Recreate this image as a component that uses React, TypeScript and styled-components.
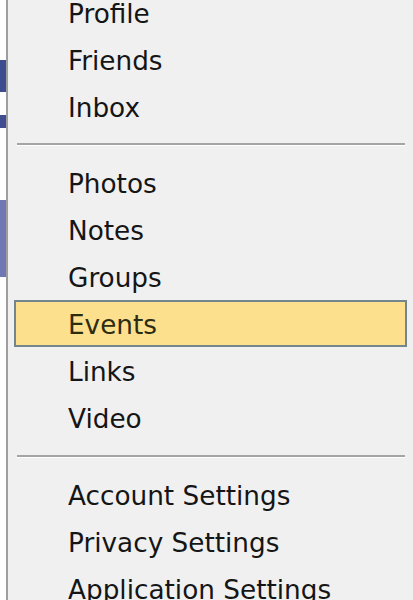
import React from "react";
import styled, { createGlobalStyle } from "styled-components";

const Global = createGlobalStyle`
  html, body { margin: 0; padding: 0; background: #ffffff; }
  body { width: 413px; height: 600px; overflow: hidden; }
`;

const Page = styled.div`
  display: flex;
  width: 413px;
  height: 600px;
  overflow: hidden;
  background: #fdfdfd;
`;

const Strip = styled.div`
  width: 6px;
  display: flex;
  flex-direction: column;
  flex-shrink: 0;
`;

const Block = styled.div<{ $top: number; $h: number; $c: string }>`
  margin-top: ${(p) => p.$top}px;
  height: ${(p) => p.$h}px;
  background: ${(p) => p.$c};
`;

const Menu = styled.div`
  flex: 1;
  background: #f0f0f0;
  border-left: 2px solid #9d9d9d;
  display: flex;
  flex-direction: column;
  font-family: "DejaVu Sans", "Liberation Sans", sans-serif;
  font-size: 26.3px;
  color: #151515;
`;

const List = styled.div`
  margin-top: -11px;
  display: flex;
  flex-direction: column;
`;

const Item = styled.div<{ $active?: boolean }>`
  box-sizing: border-box;
  height: 47px;
  margin: 0 6px;
  padding-left: 52px;
  padding-top: 2px;
  display: flex;
  align-items: center;
  border: 2px solid ${(p) => (p.$active ? "#72868b" : "transparent")};
  background: ${(p) => (p.$active ? "#fce08e" : "transparent")};
  color: ${(p) => (p.$active ? "#2e2c10" : "#151515")};
  white-space: nowrap;
`;

const Separator = styled.div<{ $top: number; $bottom: number }>`
  height: 2px;
  background: #a4a4a4;
  border-bottom: 1px solid #ffffff;
  margin: ${(p) => p.$top}px 8px ${(p) => p.$bottom}px 9px;
`;

const groups = [
  ["Profile", "Friends", "Inbox"],
  ["Photos", "Notes", "Groups", "Events", "Links", "Video"],
  ["Account Settings", "Privacy Settings", "Application Settings"],
];

export default function App() {
  return (
    <Page>
      <Global />
      <Strip>
        <Block $top={60} $h={32} $c="#3d4b8f" />
        <Block $top={23} $h={13} $c="#3f4c90" />
        <Block $top={72} $h={77} $c="#6f77b5" />
      </Strip>
      <Menu>
        <List>
          {groups.map((g, gi) => (
            <React.Fragment key={gi}>
              {gi > 0 && <Separator $top={gi === 1 ? 13 : 14} $bottom={13} />}
              {g.map((label) => (
                <Item key={label} $active={label === "Events"}>
                  {label}
                </Item>
              ))}
            </React.Fragment>
          ))}
        </List>
      </Menu>
    </Page>
  );
}
